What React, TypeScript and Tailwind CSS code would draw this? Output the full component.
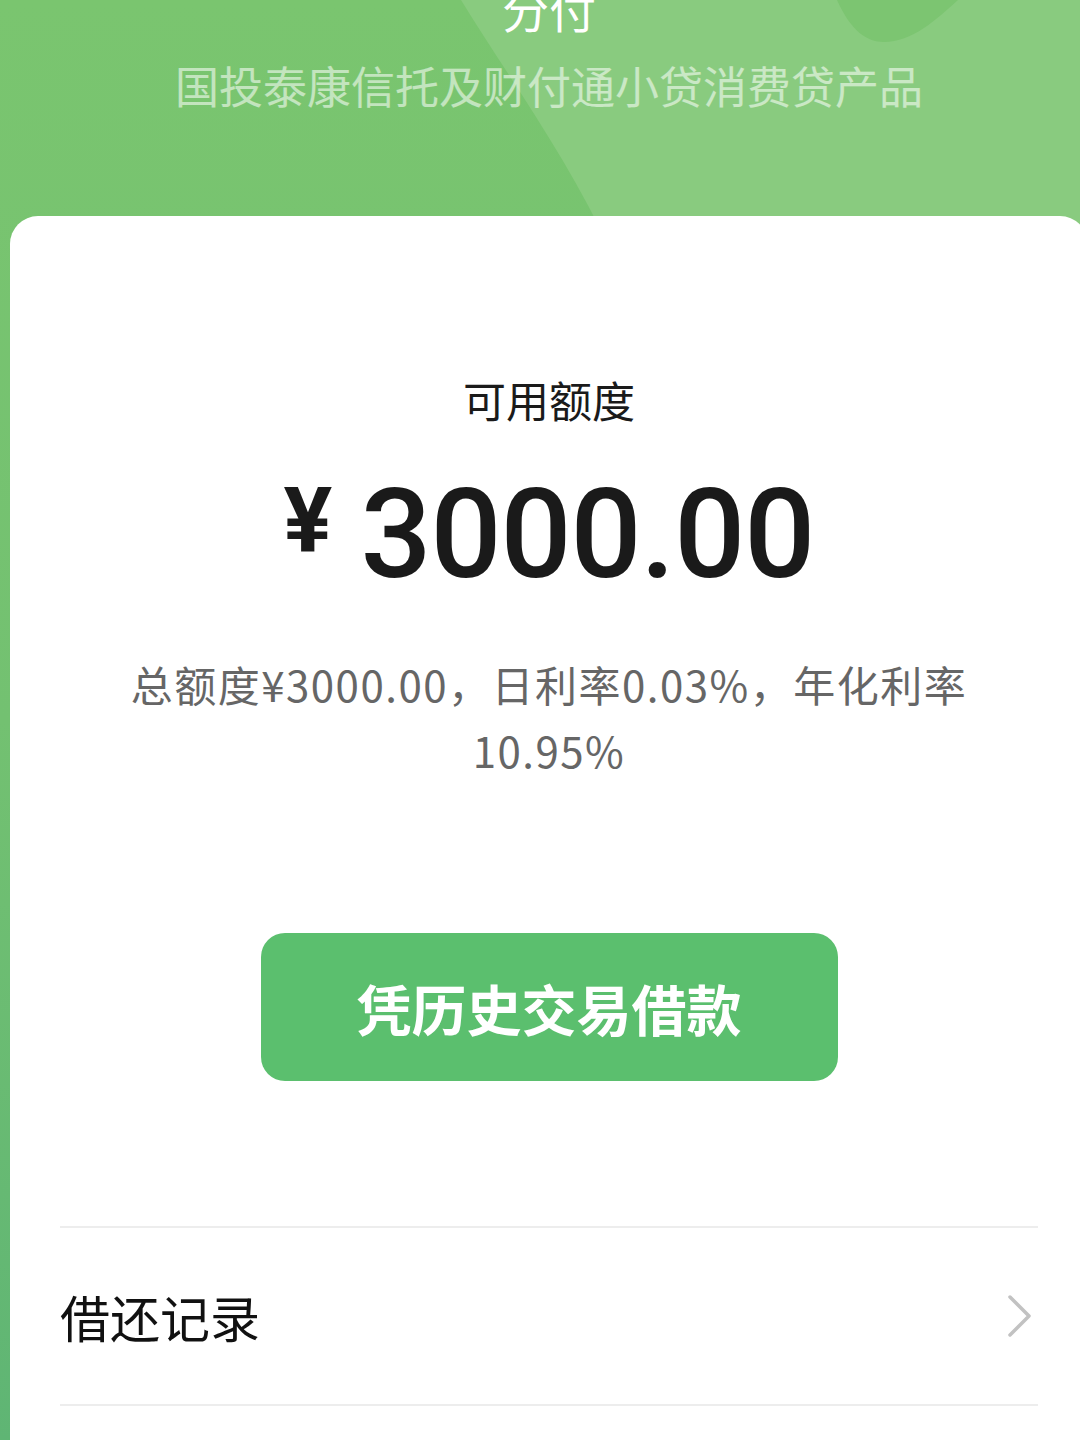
import React from "react";

const cjk = '"Noto Sans CJK SC", "Noto Sans", sans-serif';

export default function App() {
  return (
    <div className="w-[1080px] h-[1440px] overflow-hidden bg-[#62b874]">
      <div className="relative w-[1098px] h-[1440px] bg-gradient-to-b from-[#7ac56f] via-[#73c171] to-[#5fb574]">
        <svg
          className="absolute left-0 top-0"
          width="1098"
          height="260"
          viewBox="0 0 1098 260"
        >
          <path d="M461 0 C 510 80, 570 160, 615 260 L 1098 260 L 1098 0 Z" fill="#89cb7f" />
          <path d="M837 0 C 848 24, 862 42, 884 42 C 912 42, 936 20, 958 0 Z" fill="#7cc571" />
        </svg>

        <div
          className="relative flex flex-col items-center h-[216px]"
          style={{ fontFamily: cjk }}
        >
          <div className="mt-[-16px] text-[47px] leading-none text-white">分付</div>
          <div className="mt-[32px] text-[44px] leading-none text-white/55">
            国投泰康信托及财付通小贷消费贷产品
          </div>
        </div>

        <div
          className="relative mx-[10px] h-[1240px] bg-white rounded-t-[28px] px-[50px] flex flex-col items-center"
          style={{ fontFamily: cjk }}
        >
          <div className="mt-[162px] text-[43px] leading-none text-[#1a1a1a]">可用额度</div>

          <div
            className="mt-[51px] flex items-start text-[#1a1a1a] font-bold leading-none"
            style={{ fontFamily: 'Roboto, "Liberation Sans", sans-serif' }}
          >
            <span className="mt-[4px] mr-[28px] text-[91px] leading-none">¥</span>
            <span className="text-[125px] leading-none font-medium tracking-[-1px]">3000.00</span>
          </div>

          <div className="mt-[54px] text-center text-[42px] tracking-[1.5px] leading-[66px] text-[#666666]">
            总额度¥3000.00，日利率0.03%，年化利率
            <br />
            10.95%
          </div>

          <button className="mt-[150px] w-[577px] h-[148px] rounded-[24px] bg-[#5bbf6e] flex items-center justify-center text-white text-[55px] font-bold leading-none">
            凭历史交易借款
          </button>

          <div className="mt-[145px] w-full h-[2px] bg-[#ededed]" />
          <div className="w-full h-[176px] flex items-center justify-between">
            <span className="text-[50px] leading-none text-[#111111]">借还记录</span>
            <svg width="26" height="44" viewBox="0 0 26 44" className="mr-[5px]">
              <path d="M3 3 L22 22 L3 41" fill="none" stroke="#c2c2c2" strokeWidth="3.5" strokeLinecap="round" strokeLinejoin="round" />
            </svg>
          </div>
          <div className="w-full h-[2px] bg-[#ededed]" />
        </div>
      </div>
    </div>
  );
}
